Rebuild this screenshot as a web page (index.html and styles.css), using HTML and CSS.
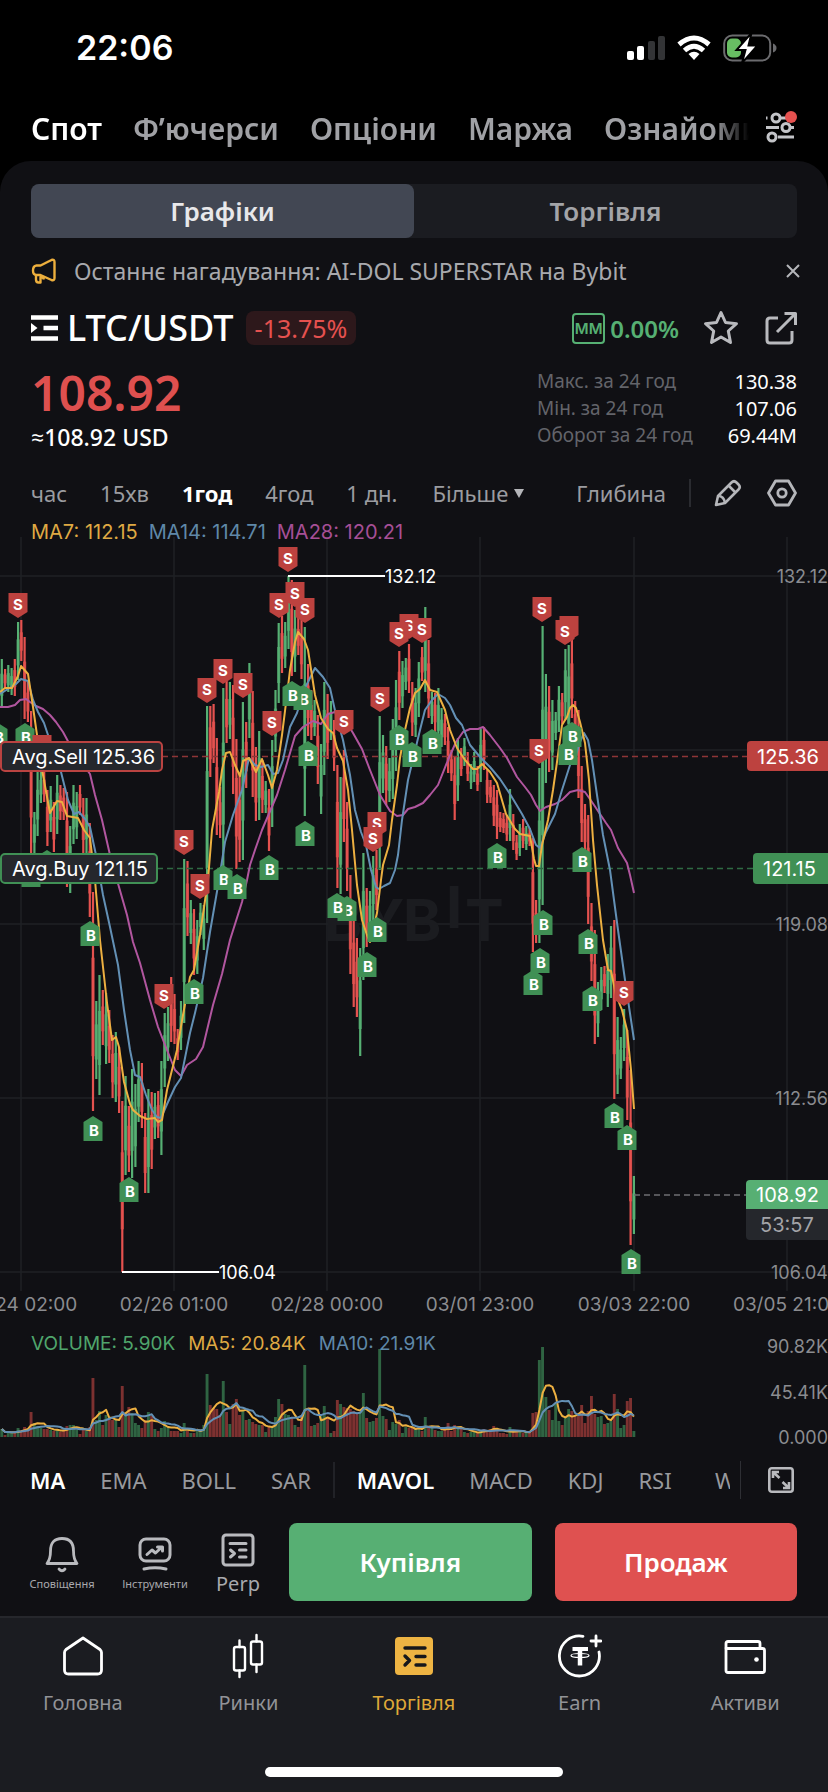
FILE: index.html
```html
<!DOCTYPE html>
<html lang="uk">
<head>
<meta charset="utf-8">
<meta name="viewport" content="width=device-width, initial-scale=1">
<title>LTC/USDT</title>
<link rel="stylesheet" href="styles.css">
</head>
<body>
<header class="status">
  <span class="status-time">22:06</span>
  <div class="status-icons">
    <svg width="38" height="26" viewBox="0 0 38 26"><g fill="#fff"><rect x="0" y="16" width="7" height="9" rx="2"/><rect x="10" y="11" width="7" height="14" rx="2"/></g><g fill="#333436"><rect x="21" y="6" width="7" height="19" rx="2"/><rect x="31" y="1" width="7" height="24" rx="2"/></g></svg>
    <svg width="34" height="26" viewBox="0 0 34 26"><g fill="none" stroke="#fff" stroke-width="5"><path d="M2 9.500Q17 -3.500 32 9.500"/><path d="M7.500 15.500Q17 7 26.500 15.500"/></g><path d="M17 25L11.500 19Q17 14.500 22.500 19Z" fill="#fff"/></svg>
    <svg width="54" height="28" viewBox="0 0 54 28"><rect x="1.200" y="1.500" width="46" height="25" rx="8" fill="none" stroke="#6b6b6e" stroke-width="2"/><path d="M50 9.500Q53.500 11 53.500 14T50 18.500Z" fill="#6b6b6e"/><rect x="4" y="4.500" width="14" height="19" rx="5" fill="#68bd63"/><path d="M28.500 -1L13.500 16H22.500L19 29L34.500 11.500H25.500Z" fill="#fff" stroke="#000" stroke-width="2"/></svg>
  </div>
</header>

<nav class="markets">
  <div class="markets-list">
    <a class="market is-active" href="#spot">Спот</a>
    <a class="market" href="#futures">Ф’ючерси</a>
    <a class="market" href="#options">Опціони</a>
    <a class="market" href="#margin">Маржа</a>
    <a class="market" href="#learn">Ознайомитися</a>
  </div>
  <button class="icon-btn filter" aria-label="Налаштування">
    <svg width="32" height="36" viewBox="0 5 32 36" fill="none" stroke="#c3c4c8" stroke-width="3"><path d="M1 12H2.500M15 12H24M1 21.500H14M26 21.500H29M13 31H29"/><circle cx="11" cy="12" r="4"/><circle cx="21" cy="21.500" r="4"/><circle cx="7" cy="31" r="4"/><circle cx="26" cy="11" r="6" fill="#e5514f" stroke="none"/></svg>
  </button>
</nav>

<main class="panel">
  <div class="segments">
    <button class="segment is-active">Графіки</button>
    <button class="segment">Торгівля</button>
  </div>

  <div class="notice">
    <svg width="26" height="26" viewBox="0 0 26 26" fill="none" stroke="#edaf3d" stroke-width="2.400" stroke-linejoin="round"><path d="M9.500 7.500L20.500 2Q23.500 1 23.500 4V20Q23.500 23 20.500 22L9.500 17H5.500Q2 17 2 12.500T5.500 7.500Z"/><path d="M5 17V21.500Q5 24.500 7.500 24.500H9.500V19Q12.500 19 13 21.500"/></svg>
    <p class="notice-text">Останнє нагадування: AI-DOL SUPERSTAR на Bybit</p>
    <button class="icon-btn notice-close" aria-label="Закрити"><svg width="14" height="14" viewBox="0 0 14 14" stroke="#b5b6ba" stroke-width="2"><path d="M1 1L13 13M13 1L1 13"/></svg></button>
  </div>

  <div class="pair">
    <svg width="27" height="28" viewBox="0 0 27 28" fill="none" stroke="#fff" stroke-width="4.500"><path d="M0 3.500H27M12.500 14H27M0 24.500H27"/><path d="M0 9L6.500 14L0 19Z" fill="#fff" stroke="none"/></svg>
    <h1 class="pair-name">LTC/USDT</h1>
    <span class="pair-change">-13.75%</span>
    <span class="mm">MM</span>
    <span class="mm-rate">0.00%</span>
    <button class="icon-btn star" aria-label="Обране"><svg width="36" height="36" viewBox="0 0 36 36" fill="none" stroke="#b9babe" stroke-width="3" stroke-linejoin="round"><path d="M18 2.500L22.500 12.500L33.500 13.700L25.300 21L27.500 32.500L18 27L8.500 32.500L10.700 21L2.500 13.700L13.500 12.500Z"/></svg></button>
    <button class="icon-btn share" aria-label="Поділитися"><svg width="32" height="34" viewBox="0 0 32 34" fill="none" stroke="#b9babe" stroke-width="3" stroke-linejoin="round"><path d="M13 7H5Q2 7 2 10V29Q2 32 5 32H24Q27 32 27 29V20"/><path d="M12 21L30 3M19.500 2.500H30.500V14"/></svg></button>
  </div>

  <div class="quote">
    <div class="quote-main">
      <p class="price">108.92</p>
      <p class="price-usd">≈108.92 USD</p>
    </div>
    <dl class="stats">
      <dt>Макс. за 24 год</dt><dd>130.38</dd>
      <dt>Мін. за 24 год</dt><dd>107.06</dd>
      <dt>Оборот за 24 год</dt><dd>69.44M</dd>
    </dl>
  </div>

  <div class="frames">
    <button class="frame">час</button>
    <button class="frame">15хв</button>
    <button class="frame is-active">1год</button>
    <button class="frame">4год</button>
    <button class="frame">1 дн.</button>
    <button class="frame frame-more">Більше <svg width="10" height="9" viewBox="0 0 10 9"><path d="M0 0H10L5 9Z" fill="#b5b6ba"/></svg></button>
    <button class="frame frame-depth">Глибина</button>
    <span class="frames-rule"></span>
    <button class="icon-btn" aria-label="Малювання"><svg width="28" height="28" viewBox="0 0 28 28" fill="none" stroke="#b5b6ba" stroke-width="2.600" stroke-linejoin="round"><path d="M2 26L4 17L17.500 3.500Q20 1 22.500 3.500L24.500 5.500Q27 8 24.500 10.500L11 24Z"/><path d="M14.500 6.500L21.500 13.500M4 17Q10 17 11 24"/></svg></button>
    <button class="icon-btn frames-gear" aria-label="Налаштування графіка"><svg width="30" height="28" viewBox="0 0 30 28" fill="none" stroke="#b5b6ba" stroke-width="2.800" stroke-linejoin="round"><path d="M8.500 2H21.500L28.500 14L21.500 26H8.500L1.500 14Z"/><circle cx="15" cy="14" r="4.200"/></svg></button>
  </div>
</main>

<section class="charts">
  <p class="legend"><span class="c-yellow">MA7: 112.15</span><span class="c-blue">MA14: 114.71</span><span class="c-purple">MA28: 120.21</span></p>
  <svg id="price-chart" class="price-chart" viewBox="0 0 828 790" role="img" aria-label="Графік ціни LTC/USDT"></svg>
  <div class="volume">
    <svg id="volume-chart" class="volume-chart" viewBox="0 0 828 128" role="img" aria-label="Обсяг"></svg>
    <p class="legend volume-legend"><span class="c-green">VOLUME: 5.90K</span><span class="c-yellow">MA5: 20.84K</span><span class="c-blue">MA10: 21.91K</span></p>
  </div>
</section>

<div class="indicators">
  <div class="indicator-list">
    <button class="indicator is-active">MA</button>
    <button class="indicator">EMA</button>
    <button class="indicator">BOLL</button>
    <button class="indicator">SAR</button>
    <span class="indicator-rule"></span>
    <button class="indicator is-active">MAVOL</button>
    <button class="indicator">MACD</button>
    <button class="indicator">KDJ</button>
    <button class="indicator">RSI</button>
    <button class="indicator">WR</button>
  </div>
  <button class="icon-btn expand" aria-label="На весь екран"><svg width="26" height="26" viewBox="0 0 26 26" fill="none" stroke="#b9babe" stroke-width="2.600"><rect x="1.300" y="1.300" width="23.400" height="23.400" rx="2.500"/><path d="M5 11V5H11M5 5L11.500 11M21 15V21H15M21 21L14.500 15"/></svg></button>
</div>

<div class="actions">
  <button class="tool tool-small"><svg width="34" height="38" viewBox="0 0 34 38" fill="none" stroke="#b9babe" stroke-width="2.800" stroke-linecap="round" stroke-linejoin="round"><path d="M2 27.500Q5.500 23 5.500 15Q5.500 2.500 17 2.500T28.500 15Q28.500 23 32 27.500Z"/><path d="M14 33Q17 36.500 20 33"/></svg><span>Сповіщення</span></button>
  <button class="tool tool-small"><svg width="34" height="38" viewBox="0 -1 34 38" fill="none" stroke="#b9babe" stroke-width="3" stroke-linecap="round" stroke-linejoin="round"><rect x="2" y="2" width="30" height="22" rx="6"/><path d="M9 17.500L14 13L17.500 16L24 10M19.500 10H24.500V14"/><path d="M6 32Q17 29.500 28 32"/></svg><span>Інструменти</span></button>
  <button class="tool"><svg width="34" height="34" viewBox="0 0 34 34" fill="none" stroke="#b9babe" stroke-width="3" stroke-linecap="round" stroke-linejoin="round"><rect x="2" y="2" width="30" height="30" rx="3"/><path d="M9 10.500H25M18.500 17H25M18.500 24H25M9.500 17L13.500 20.500L9.500 24"/></svg><span>Perp</span></button>
  <button class="trade trade-buy">Купівля</button>
  <button class="trade trade-sell">Продаж</button>
</div>

<footer class="tabbar">
  <nav class="tabs">
    <a class="tab" href="#home"><svg width="44" height="46" viewBox="0 0 44 46" fill="none" stroke="#fff" stroke-width="2.800" stroke-linejoin="round"><path d="M22 5L39 16.500Q40.500 18 40.500 19.500V37Q40.500 41 36.500 41H7.500Q3.500 41 3.500 37V19.500Q3.500 18 5 16.500Z"/></svg>Головна</a>
    <a class="tab" href="#markets"><svg width="44" height="46" viewBox="0 0 44 46" fill="none" stroke="#fff" stroke-width="2.400" stroke-linecap="round"><rect x="8" y="14" width="11" height="23.500" rx="2"/><rect x="25" y="8.500" width="11" height="23" rx="2"/><path d="M13.500 7.500V14M13.500 37.500V44M30.500 2V8.500M30.500 31.500V39"/></svg>Ринки</a>
    <a class="tab is-active" href="#trade"><svg width="44" height="46" viewBox="0 0 44 46" fill="none" stroke="#16171b" stroke-width="3.400" stroke-linecap="round" stroke-linejoin="round"><rect x="3" y="4" width="38" height="38" rx="4" fill="#eeb443" stroke="none"/><path d="M13 15H33M24 23.500H33M24 32H33M13 23L17.500 27.500L13 32"/></svg>Торгівля</a>
    <a class="tab" href="#earn"><svg width="44" height="46" viewBox="0 0 44 46" fill="none" stroke="#fff" stroke-width="2.800" stroke-linecap="round"><path d="M25 3.300A20 20 0 1 0 41 19"/><path d="M38 3V13M33 8H43"/><path d="M14.500 16H30" stroke-width="4" stroke-linecap="butt"/><path d="M22 16V32.500" stroke-width="4.500" stroke-linecap="butt"/><ellipse cx="22" cy="22.500" rx="9" ry="2" stroke-width="1.200"/></svg>Earn</a>
    <a class="tab" href="#assets"><svg width="44" height="46" viewBox="0 0 44 46" fill="none" stroke="#fff" stroke-width="2.800" stroke-linejoin="round"><path d="M3 15.500V10.500Q3 8.500 5 8.500H35Q37 8.500 37 10.500V15.500"/><path d="M3 15.500H39.500Q41.500 15.500 41.500 17.500V37.500Q41.500 39.500 39.500 39.500H5Q3 39.500 3 37.500Z"/><circle cx="33.500" cy="26.500" r="2.300" fill="#fff" stroke="none"/></svg>Активи</a>
  </nav>
  <div class="home-bar"></div>
</footer>
<script src="chart.js"></script>
</body>
</html>
```
FILE: styles.css
```css
* { box-sizing: border-box; margin: 0; padding: 0; }

body {
  background: #101014;
  color: #fff;
  font-family: "Noto Sans", "Open Sans", sans-serif;
  overflow-x: hidden;
  min-height: 100vh;
  display: flex;
  flex-direction: column;
}

button { background: none; border: 0; color: inherit; font: inherit; cursor: pointer; white-space: nowrap; }
a { color: inherit; text-decoration: none; }
svg { display: block; flex: none; }
.icon-btn { display: flex; align-items: center; justify-content: center; flex: none; }

.status {
  background: #000;
  height: 96px;
  padding: 0 51px 0 76px;
  display: flex;
  align-items: center;
  justify-content: space-between;
}
.status-time { font: 600 34px/40px Inter, sans-serif; }
.status-icons { display: flex; align-items: center; gap: 12px; }

.markets {
  background: #000;
  height: 96px;
  margin-bottom: -31px;
  padding: 0 31px 31px;
  display: flex;
  align-items: center;
  gap: 16px;
}
.markets-list {
  flex: 1;
  min-width: 0;
  display: flex;
  gap: 31px;
  overflow: hidden;
  mask-image: linear-gradient(to right, #000 95%, transparent);
}
.market { font-size: 30px; line-height: 42px; font-weight: 600; color: #a0a1a5; white-space: nowrap; }
.market.is-active { color: #fff; }

.panel {
  background: #101014;
  border-radius: 31px 31px 0 0;
  padding: 23px 31px 0;
}

.segments { display: flex; background: #1b1c21; border-radius: 8px; }
.segment { flex: 1; height: 54px; border-radius: 8px; font-size: 26px; font-weight: 600; color: #a3a4a8; }
.segment.is-active { background: #424753; color: #e8e8ea; }

.notice { height: 66px; display: flex; align-items: center; gap: 17px; }
.notice-text { flex: 1; font-size: 23px; line-height: 32px; color: #a8a9ad; white-space: nowrap; }
.notice-close { margin-right: -3px; }

.pair { height: 48px; display: flex; align-items: center; white-space: nowrap; }
.pair-name { margin-left: 9px; font-size: 36px; line-height: 44px; font-weight: 500; }
.pair-change { margin-left: 12px; padding: 0 9px; border-radius: 8px; background: #2d181b; color: #e5514f; font-size: 25px; line-height: 34px; }
.mm { margin-left: auto; width: 33px; height: 31px; border: 2px solid #56b073; border-radius: 4px; color: #56b073; font: 600 15px/27px Inter, sans-serif; text-align: center; }
.mm-rate { margin-left: 5px; font-size: 24px; font-weight: 600; color: #56b073; }
.star { margin-left: 24px; }
.share { margin-left: 26px; }

.quote { height: 113px; display: flex; justify-content: space-between; align-items: flex-start; }
.price { margin-top: 12px; font-size: 48px; line-height: 58px; font-weight: 600; color: #de504f; }
.price-usd { font-size: 23px; line-height: 30px; font-weight: 500; }
.stats { margin-top: 16px; width: 260px; display: grid; grid-template-columns: 1fr auto; font-size: 19px; line-height: 27px; white-space: nowrap; }
.stats dt { color: #63646a; }
.stats dd { font-size: 20px; text-align: right; }

.frames { height: 56px; display: flex; align-items: center; gap: 33px; font-size: 22px; color: #9b9ca0; }
.frame.is-active { color: #fff; font-weight: 700; }
.frame-more { display: flex; align-items: center; gap: 6px; margin-left: 2px; }
.frame-depth { margin-left: auto; }
.frames-rule { width: 2px; height: 28px; background: #2a2b30; margin: 0 -10px; }
.frames-gear { margin-left: -8px; }

.legend { position: relative; padding-left: 31px; height: 22px; display: flex; gap: 11px; font: 20px/22px Inter, sans-serif; white-space: nowrap; }
.c-yellow { color: #dfa943; }
.c-blue { color: #5f88a8; }
.c-purple { color: #a64f96; }
.c-green { color: #4fa56c; }
.price-chart { width: 100%; height: auto; margin-top: -13px; font-family: Inter, sans-serif; }
.volume { position: relative; }
.volume-chart { width: 100%; height: auto; font-family: Inter, sans-serif; }
.volume-legend { position: absolute; top: 13px; left: 0; gap: 13px; font-size: 19px; }

.grid { stroke: #1f2025; stroke-width: 1.5; }
.axis { fill: #8b8c90; font-size: 19px; }
.axis-price { font-size: 18px; }
.watermark { fill: #1b1c20; font-size: 58px; font-weight: 700; }
.line { fill: none; stroke-width: 2; stroke-linejoin: round; }
.dash { stroke-width: 1.4; stroke-dasharray: 6 4; fill: none; }
.marker-text { fill: #fff; font-size: 15px; font-weight: 700; text-anchor: middle; }
.callout { fill: #fff; font-size: 18px; }
.tag { fill: #fff; font-size: 20px; }
.tag-muted { fill: #a3a4a8; font-size: 20px; }

.indicators { height: 64px; padding: 0 34px 0 30px; display: flex; align-items: center; }
.indicator-list { flex: 1; min-width: 0; display: flex; align-items: center; gap: 35px; font-size: 22px; line-height: 36px; color: #98999d; padding-right: 10px; overflow: clip; }
.indicator:last-child { margin-left: auto; width: 15px; overflow: hidden; text-align: left; }
.indicator.is-active { color: #fff; font-weight: 600; }
.indicator-rule { flex: none; width: 2px; height: 36px; background: #212227; margin: 0 -13px; }
.expand { height: 38px; padding-left: 27px; border-left: 1px solid #2e2f34; }

.actions { padding: 11px 31px 15px; display: flex; align-items: stretch; }
.tool { flex: none; width: 70px; display: flex; flex-direction: column; align-items: center; justify-content: flex-start; padding-top: 10px; font-size: 20px; line-height: 22px; color: #a8a9ad; gap: 6px; }
.tool-small { width: 62px; font-size: 11px; line-height: 14px; padding-top: 13px; gap: 3px; }
.tool-small + .tool-small { margin-left: 31px; }
.tool-small + .tool:not(.tool-small) { margin-left: 17px; }
.trade { flex: 1; height: 78px; border-radius: 8px; font-size: 26px; font-weight: 600; color: #fff; }
.trade-buy { background: #57af73; margin-left: 16px; }
.trade-sell { background: #df5150; margin-left: 23px; }

.tabbar { flex: 1; background: #1b1c21; border-top: 2px solid #26272c; padding: 15px 0; display: flex; flex-direction: column; justify-content: space-between; align-items: center; }
.tabs { display: flex; width: 100%; }
.tab { flex: 1; display: flex; flex-direction: column; align-items: center; gap: 10px; font-size: 20px; line-height: 28px; color: #929397; }
.tab.is-active { color: #dfa838; }
.home-bar { width: 36%; height: 10px; border-radius: 5px; background: #fff; }
```
FILE: chart.js
```js
// Hourly candles, oldest first: colour, high, low, volume (chart units).
const CANDLES = `g129,178,8 r139,158,2 g135,162,5 g138,165,4 r129,166,5 g92,150,9 r90,131,6 r107,189,10 r150,192,9 r181,323,25
g282,323,14 g240,306,11 g240,273,9 r240,272,8 r260,316,8 g256,302,7 r272,322,6 g245,304,7 r255,290,5 r258,290,7
r262,357,11 g296,363,12 g255,314,12 g262,309,7 r255,285,3 r268,324,8 g268,323,6 r293,387,10 r362,581,59 g471,549,17
g445,565,26 r460,515,12 g463,534,22 r480,533,19 r505,568,17 g502,572,17 r517,583,10 r571,742,51 g546,645,24 r576,642,30
g539,648,24 g554,637,14 g531,592,12 r533,598,9 r583,663,17 g559,663,25 r562,639,21 g563,609,8 r561,608,6 g531,625,9
g483,557,16 g477,531,11 r447,512,6 r464,514,6 r499,530,6 g471,520,4 g329,493,14 r331,406,6 g370,414,4 r379,445,4
g390,444,8 g373,405,8 g375,420,12 g176,393,63 r176,247,32 r174,233,29 r208,305,28 r257,308,22 g158,340,56 r150,213,25
g152,209,13 r155,264,33 r209,339,38 r243,332,22 g172,330,26 r192,258,17 g133,208,18 r161,267,15 r217,291,13 g201,290,12
r230,283,12 g251,283,5 r259,321,10 g210,297,11 g160,222,20 g93,173,38 r86,143,33 g92,138,23 g46,119,22 r50,146,19
g80,142,12 r88,125,10 r90,149,22 g97,286,72 r134,206,26 r160,210,11 g170,206,12 r185,254,14 g214,284,21 g152,245,31
r164,229,20 g171,210,4 r190,241,6 r235,358,37 g247,364,33 r220,312,30 r272,361,29 r345,444,28 r385,477,26 r408,487,24
g418,526,25 g323,450,44 r358,417,19 g361,410,15 g326,390,16 r320,380,19 g186,340,88 g205,263,21 r216,275,18 g228,272,7
g189,269,15 g150,241,13 r121,190,17 g131,178,4 g128,160,10 r114,163,9 r152,206,9 g158,207,8 g132,187,8 r117,151,6
g77,162,20 r110,188,9 g162,194,11 r163,202,7 g158,215,6 g178,217,6 r184,215,8 r197,243,14 r220,251,6 r226,290,12
g208,271,9 r218,246,9 g208,236,5 r222,251,4 g234,259,5 g222,252,5 r236,261,4 g199,252,6 r197,240,8 r240,273,7
r250,273,8 r255,296,11 r260,309,7 r282,302,4 r283,303,4 r285,311,3 g259,311,10 r284,320,5 r305,330,6 g294,326,5
r289,318,4 g296,320,5 r298,316,4 r308,422,24 r370,413,25 g238,413,77 g96,375,90 g144,253,40 r156,242,27 g170,240,17
g182,210,33 g156,202,16 r163,194,12 g119,190,20 g115,220,28 r110,188,26 r171,215,20 r180,268,21 r236,312,32 r274,325,14
r285,394,26 r373,451,41 r400,514,23 g452,507,20 g437,480,21 r436,463,13 g424,477,14 g396,468,16 r390,569,43 g487,564,28
g507,549,9 g479,531,12 r500,590,36 r540,715,39 g646,704,6`.split(/\s+/).map(s => [s[0], ...s.slice(1).split(',').map(Number)]);

const MA7 = '0,162 5,158 12,158 18,146 21,136 28,144 33,177 37,205 40,230 43,245 50,283 57,271 62,272 67,286 78,288 84,300 90,308 95,350 100,410 107,473 112,510 116,507 119,517 124,552 130,574 133,580 140,586 147,589 155,588 158,592 162,590 167,560 177,520 183,485 190,447 194,440 200,405 208,350 212,300 219,262 222,240 226,223 230,222 235,235 240,246 243,231 249,228 256,242 262,229 268,245 272,258 277,240 282,205 287,165 290,140 295,112 298,102 304,109 308,120 315,165 321,188 328,199 333,203 337,218 343,231 348,260 352,300 357,355 362,390 367,405 370,412 377,383 381,350 383,335 389,315 392,290 397,255 400,228 405,200 410,178 415,163 420,159 425,150 430,160 437,162 445,180 450,200 457,218 465,230 473,239 477,239 482,234 490,242 497,253 506,284 515,299 520,304 530,306 534,329 536,336 539,336 542,315 548,290 553,260 558,225 562,195 567,187 570,178 573,175 576,178 580,192 585,213 589,250 593,310 597,355 603,410 608,440 611,441 616,465 622,480 627,500 631,540 634,579';
const MA14 = '0,164 8,159 16,154 21,149 28,151 33,170 38,182 44,193 49,208 61,242 68,270 74,284 79,282 85,289 90,297 96,325 103,365 110,397 118,435 124,480 130,520 135,545 140,547 146,565 152,580 157,587 161,588 168,572 175,557 181,548 190,503 195,483 203,448 210,402 219,350 225,312 233,285 242,260 249,228 255,235 261,237 268,235 273,244 278,243 283,230 290,197 297,183 304,160 310,148 315,138 323,147 330,158 336,185 343,210 350,245 355,280 361,302 366,315 371,340 376,357 379,359 384,356 390,353 395,340 398,325 402,290 408,250 414,225 420,200 425,180 432,170 438,164 445,168 450,175 456,188 462,195 470,215 480,227 490,237 500,249 510,264 522,284 530,299 536,315 540,318 546,302 555,284 562,260 570,235 576,225 580,212 584,203 588,210 592,230 597,265 603,305 610,340 618,400 625,450 634,510';
const MA28 = '0,177 8,177 15,175 20,170 26,169 30,172 36,176 43,179 50,185 56,192 63,202 70,215 80,230 90,244 95,265 102,290 110,325 117,350 127,385 133,412 140,433 150,470 158,497 167,520 175,540 181,546 187,535 196,529 203,517 208,496 213,475 222,444 230,410 242,372 247,350 250,335 255,320 262,300 268,286 277,265 285,240 295,206 303,197 313,191 321,194 328,184 335,182 345,190 353,203 362,219 370,240 380,265 390,281 397,286 403,285 408,279 415,277 423,273 430,265 438,255 448,230 456,212 463,202 470,199 478,199 483,197 490,205 500,218 507,228 517,247 525,257 531,265 536,275 540,281 546,277 555,274 562,270 570,262 578,260 585,262 592,272 600,284 606,293 611,300 618,318 627,333 630,345 634,363';

// Trades as [x, y]: y is the top edge of a sell tag, the tip of a buy tag.
const SELLS = [[18, 63], [42, 205], [164, 454], [184, 300], [200, 344], [207, 148], [223, 129], [243, 143], [272, 181], [279, 63], [305, 68], [295, 52], [288, 17], [344, 180], [380, 157], [409, 84], [399, 92], [422, 88], [377, 282], [373, 297], [542, 67], [569, 86], [565, 90], [539, 209], [624, 451]];
const BUYS = [[-2, 193], [25, 193], [31, 332], [47, 320], [90, 391], [93, 586], [129, 647], [194, 449], [223, 335], [237, 344], [269, 325], [303, 155], [292, 151], [305, 291], [308, 211], [347, 366], [337, 363], [377, 387], [367, 422], [399, 195], [412, 212], [432, 199], [497, 313], [572, 192], [568, 210], [582, 317], [543, 380], [533, 440], [540, 418], [588, 399], [592, 456], [614, 573], [627, 595], [631, 719]];

const STEP = 3.258;
const xOf = i => 1.8 + i * STEP;
const UP = '#56b073', DOWN = '#e5524f';

function priceChart() {
  const out = [];
  const gridX = [21, 174, 327, 480, 634, 787];
  const levels = [[46, '132.12'], [220, ''], [394, '119.08'], [568, '112.56'], [742, '106.04']];
  gridX.forEach(x => out.push(`<path class="grid" d="M${x} 7V761"/>`));
  levels.forEach(([y]) => out.push(`<path class="grid" d="M0 ${y}H828"/>`));
  out.push('<g class="watermark"><text x="324" y="411">B</text><text x="362" y="411">Y</text><text x="403" y="411">B</text><text x="446" y="398">I</text><text x="465" y="411">T</text></g>');

  CANDLES.forEach(([c, hi, lo], i) => {
    const x = xOf(i), fill = c === 'g' ? UP : DOWN, span = lo - hi;
    out.push(`<rect x="${(x - 1.6).toFixed(1)}" y="${(hi + span * .3).toFixed(1)}" width="3.2" height="${(span * .45).toFixed(1)}" fill="${fill}" opacity=".75"/>`);
    out.push(`<rect x="${(x - 1.1).toFixed(1)}" y="${hi}" width="2.2" height="${span}" fill="${fill}"/>`);
  });

  out.push('<path class="dash" stroke="#8e3537" d="M162 226.500H747"/><path class="dash" stroke="#2f6b43" d="M157 338.500H753"/><path class="dash" stroke="#6d6e72" d="M634 665H746"/>');
  out.push(`<polyline class="line" stroke="#b1569f" points="${MA28}"/><polyline class="line" stroke="#6390b5" points="${MA14}"/><polyline class="line" stroke="#edb041" points="${MA7}"/>`);

  BUYS.forEach(([x, y]) => out.push(`<path fill="#409055" d="M${x} ${y}L${x + 9.5} ${y + 6}V${y + 25}H${x - 9.5}V${y + 6}Z"/><text class="marker-text" x="${x + 1}" y="${y + 20}">B</text>`));
  SELLS.forEach(([x, y]) => out.push(`<path fill="#bd423f" d="M${x - 9.5} ${y}H${x + 9.5}V${y + 19}L${x} ${y + 25}L${x - 9.5} ${y + 19}Z"/><text class="marker-text" x="${x}" y="${y + 17}">S</text>`));

  out.push('<path stroke="#fff" stroke-width="2" d="M288 46H385M122 742H219"/><text class="callout" x="385" y="53">132.12</text><text class="callout" x="219" y="749">106.04</text>');
  out.push('<rect x="1" y="212" width="161" height="29" rx="4" fill="#25272c" stroke="#ba4341" stroke-width="2"/><text class="tag" x="12" y="234">Avg.Sell 125.36</text>');
  out.push('<rect x="1" y="324" width="156" height="29" rx="4" fill="#25272c" stroke="#409055" stroke-width="2"/><text class="tag" x="12" y="346">Avg.Buy 121.15</text>');
  out.push('<path fill="#bd423f" d="M828 211H751Q747 211 747 215V237Q747 241 751 241H828Z"/><text class="tag" x="757" y="234">125.36</text>');
  out.push('<path fill="#409055" d="M828 323H757Q753 323 753 327V350Q753 354 757 354H828Z"/><text class="tag" x="763" y="346">121.15</text>');
  out.push('<path fill="#25272c" d="M828 679H746V706Q746 710 750 710H828Z"/><path fill="#57af73" d="M828 650H750Q746 650 746 654V679H828Z"/><text class="tag" x="756" y="672">108.92</text><text class="tag-muted" x="760" y="702">53:57</text>');
  levels.forEach(([y, t]) => t && out.push(`<text class="axis axis-price" x="828" y="${y + 7}" text-anchor="end">${t}</text>`));
  ['02/24 02:00', '02/26 01:00', '02/28 00:00', '03/01 23:00', '03/03 22:00', '03/05 21:00'].forEach((t, i) => out.push(`<text class="axis" x="${gridX[i]}" y="781" text-anchor="middle">${t}</text>`));
  document.getElementById('price-chart').innerHTML = out.join('');
}

function average(period) {
  return CANDLES.map((_, i) => {
    const part = CANDLES.slice(Math.max(0, i - period + 1), i + 1);
    const mean = part.reduce((sum, c) => sum + c[3], 0) / part.length;
    return `${xOf(i).toFixed(1)},${(117 - mean).toFixed(1)}`;
  }).join(' ');
}

function volumeChart() {
  const out = CANDLES.map(([c, , , v], i) =>
    `<rect x="${(xOf(i) - 1.5).toFixed(1)}" y="${117 - v}" width="2.9" height="${v}" fill="${c === 'g' ? '#2f6442' : '#7d3130'}"/>`);
  out.push(`<polyline class="line" stroke="#edb041" points="${average(5)}"/><polyline class="line" stroke="#6390b5" points="${average(10)}"/>`);
  [[33, '90.82K'], [79, '45.41K'], [124, '0.000']].forEach(([y, t]) => out.push(`<text class="axis axis-price" x="828" y="${y}" text-anchor="end">${t}</text>`));
  document.getElementById('volume-chart').innerHTML = out.join('');
}

priceChart();
volumeChart();
```
